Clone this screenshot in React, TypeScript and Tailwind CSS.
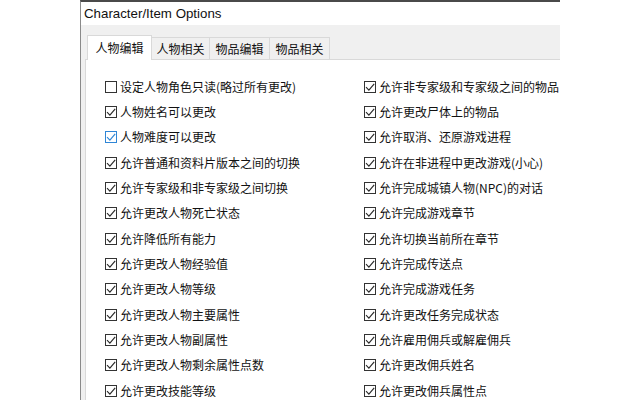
const left: string[] = [
  "设定人物角色只读(略过所有更改)",
  "人物姓名可以更改",
  "人物难度可以更改",
  "允许普通和资料片版本之间的切换",
  "允许专家级和非专家级之间切换",
  "允许更改人物死亡状态",
  "允许降低所有能力",
  "允许更改人物经验值",
  "允许更改人物等级",
  "允许更改人物主要属性",
  "允许更改人物副属性",
  "允许更改人物剩余属性点数",
  "允许更改技能等级",
];

const right: string[] = [
  "允许非专家级和专家级之间的物品",
  "允许更改尸体上的物品",
  "允许取消、还原游戏进程",
  "允许在非进程中更改游戏(小心)",
  "允许完成城镇人物(NPC)的对话",
  "允许完成游戏章节",
  "允许切换当前所在章节",
  "允许完成传送点",
  "允许完成游戏任务",
  "允许更改任务完成状态",
  "允许雇用佣兵或解雇佣兵",
  "允许更改佣兵姓名",
  "允许更改佣兵属性点",
];

const tabs = ["人物编辑", "人物相关", "物品编辑", "物品相关"];

const Check = ({ checked, hover }: { checked: boolean; hover?: boolean }) => (
  <span
    className={`w-[12px] h-[12px] shrink-0 border bg-white flex items-center justify-center ${
      hover ? "border-[#2f86d6]" : "border-[#333333]"
    }`}
  >
    {checked && (
      <svg width="10" height="10" viewBox="0 0 10 10">
        <path
          d="M1 5.2 L3.9 8.1 L9.2 1.8"
          fill="none"
          stroke={hover ? "#2f86d6" : "#2a2a2a"}
          strokeWidth="1.15"
        />
      </svg>
    )}
  </span>
);

const Option = ({ label, checked, hover }: { label: string; checked: boolean; hover?: boolean }) => (
  <div className="h-[25.33px] flex items-center gap-[3px] whitespace-nowrap">
    <Check checked={checked} hover={hover} />
    <span className="text-[12px] leading-none text-[#111]">{label}</span>
  </div>
);

export default function App() {
  return (
    <div className="w-[640px] h-[400px] bg-white overflow-hidden">
      <div className="ml-[80px] w-[480px] h-[400px] border-l border-l-[#8a8a8a] border-t-2 border-t-[#4a4a4a] bg-[#f0f0f0] flex flex-col overflow-hidden">
        <div
          className="h-[23px] shrink-0 bg-white flex items-center pl-[3px] text-[13.3px] text-[#111]"
          style={{ fontFamily: '"Liberation Sans", Arial, sans-serif' }}
        >
          Character/Item Options
        </div>
        <div
          className="flex-1 flex flex-col pl-[4px] pt-[10px]"
          style={{ fontFamily: '"Noto Sans CJK SC", "Noto Sans", sans-serif' }}
        >
          <div className="h-[24px] flex items-end pl-[2px] relative z-10">
            {tabs.map((t, i) =>
              i === 0 ? (
                <div
                  key={t}
                  className="w-[65px] h-[25px] -mb-[1px] bg-white border border-b-0 border-[#d9d9d9] flex items-center justify-center text-[12px] text-[#111]"
                >
                  {t}
                </div>
              ) : (
                <div
                  key={t}
                  className={`${i === 1 ? "w-[58px]" : "w-[60px]"} h-[22px] bg-[#f0f0f0] border border-l-0 border-b-0 border-[#d9d9d9] flex items-center justify-center text-[12px] text-[#111]`}
                >
                  {t}
                </div>
              )
            )}
          </div>
          <div className="flex-1 bg-white border-l border-t border-[#d9d9d9] pt-[14px] pl-[19px]">
            <div className="grid grid-cols-[259px_1fr]">
              {left.map((l, i) => (
                <div key={l} className="contents">
                  <Option label={l} checked={i !== 0} hover={i === 2} />
                  <Option label={right[i]} checked />
                </div>
              ))}
            </div>
          </div>
        </div>
      </div>
    </div>
  );
}
